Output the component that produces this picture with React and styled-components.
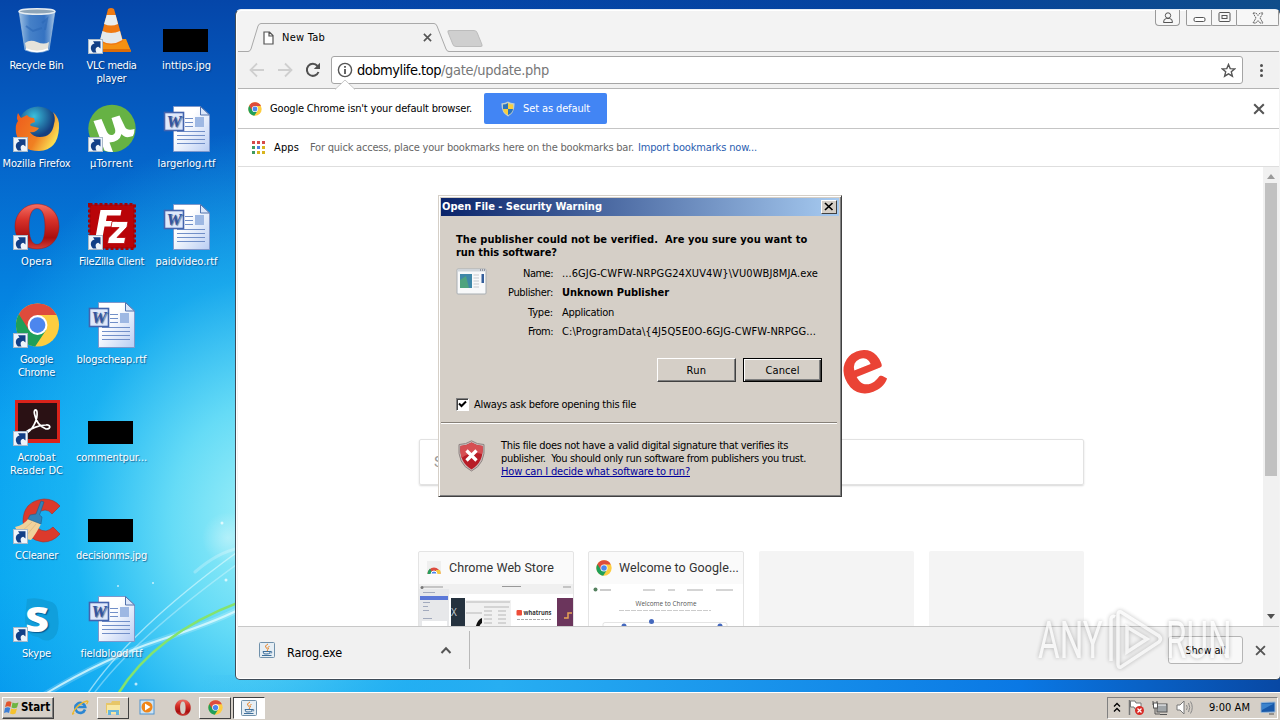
import { useLayoutEffect, useRef, useState } from "react";
import styled, { createGlobalStyle } from "styled-components";

/* Spreads the letters so that a label takes the width it has in Tahoma */
function Label({ children, w, ...props }) {
  const ref = useRef(null);
  const [spacing, setSpacing] = useState(0);

  useLayoutEffect(() => {
    const natural = ref.current.getBoundingClientRect().width;
    setSpacing((w - natural) / children.length);
  }, [children, w]);

  return (
    <LabelText ref={ref} style={{ letterSpacing: spacing }} {...props}>
      {children}
    </LabelText>
  );
}

function ShortcutArrow({ x = 0 }) {
  return (
    <g transform={`translate(${x} 33)`}>
      <rect x="0.5" y="0.5" width="14" height="14" fill="#eef4fa" stroke="#a9b9c9" />
      <path d="M5 13.500C1.500 10 2.500 5.500 6.500 4.500L5 2.200H12.500V9.500L10.300 7.800C7.500 8.500 7 10.500 8.500 13.500Z" fill="#123f86" />
    </g>
  );
}

function ChromeLogo({ size = 16 }) {
  return (
    <svg width={size} height={size} viewBox="0 0 48 48">
      <circle cx="24" cy="24" r="23" fill="#fdcd40" />
      <path d="M24 24L4.100 12.500A23 23 0 0 0 21.500 46.900L33.200 29.300Z" fill="#1f9f59" />
      <path d="M24 13.400H44.400A23 23 0 0 0 4.100 12.500L14.800 29.300Z" fill="#de4b3c" />
      <circle cx="24" cy="24" r="10.600" fill="#fff" />
      <circle cx="24" cy="24" r="8.400" fill="#4c86ee" />
    </svg>
  );
}

function RecycleBin() {
  return (
    <svg width="48" height="48">
      <defs>
        <linearGradient id="glass">
          <stop offset="0" stopColor="#b9d6ee" stopOpacity=".85" />
          <stop offset=".3" stopColor="#5c93d0" stopOpacity=".75" />
          <stop offset=".7" stopColor="#4a83c9" stopOpacity=".7" />
          <stop offset="1" stopColor="#c4dcf0" stopOpacity=".85" />
        </linearGradient>
      </defs>
      <path d="M7 5L13 44Q25 49 37 44L43 5Z" fill="url(#glass)" stroke="#9fc0df" strokeWidth=".7" />
      <path d="M13 37Q18 33 25 36T37 36L36 43Q25 48 14 43Z" fill="#e6e3da" />
      <path d="M14 43Q25 48 36 43" fill="none" stroke="#fff" strokeWidth="1.600" />
      <path d="M14 20L21 25L30 22M30 17L35 13L33 24" stroke="#2d68b7" strokeWidth="2" fill="none" opacity=".65" />
      <ellipse cx="25" cy="5.500" rx="18" ry="2.700" fill="#8ea5b8" stroke="#e6edf2" strokeWidth="1.500" />
    </svg>
  );
}

function Vlc() {
  return (
    <svg width="48" height="48">
      <path d="M13 33H39L44 45Q44 46 42 46H10Z" fill="#f59112" />
      <path d="M10 43H43L44 46H10Z" fill="#dd6d08" />
      <path d="M21 3Q24 1 27 3L36 35Q24 43 13 35Z" fill="#f07a12" />
      <path d="M19.700 9H28.700L31 18Q24 21 17 18Z" fill="#e9edef" />
      <path d="M15.400 25Q24 29 33 25L35.400 34Q24 41 13 34Z" fill="#e4e9ec" />
      <ShortcutArrow x={1} />
    </svg>
  );
}

function BlackImage() {
  return (
    <svg width="48" height="48">
      <rect x="1" y="23" width="45" height="23" fill="#000" />
    </svg>
  );
}

function Firefox() {
  return (
    <svg width="48" height="48">
      <defs>
        <linearGradient id="fox" x1="0" y1="0" x2="1" y2=".5">
          <stop offset="0" stopColor="#ee5a1d" />
          <stop offset=".65" stopColor="#f08022" />
          <stop offset="1" stopColor="#fadb52" />
        </linearGradient>
        <radialGradient id="globe" cx=".4" cy=".25">
          <stop offset="0" stopColor="#39c1dd" />
          <stop offset="1" stopColor="#153f80" />
        </radialGradient>
      </defs>
      <circle cx="26" cy="22.500" r="20" fill="url(#globe)" />
      <path d="M41 8Q44 14 42 20Q40 33 28 33Q21 33 18 28Q24 29 27 24L19 22Q16 20 23 18L22 14Q17 14 15 11L9 14L6 9Q4 14 6 17Q3 20 4 29Q8 47 27 47Q46 46 47 24Q48 14 41 8Z" fill="url(#fox)" />
      <ShortcutArrow x={1} />
    </svg>
  );
}

function UTorrent() {
  return (
    <svg width="49" height="48">
      <circle cx="25" cy="24.500" r="23.700" fill="#66b244" />
      <path d="M6.500 17L14.500 15L19.500 27Q22 32.500 26.500 30.500Q29 29 28 25L24.500 14L32.500 11.500L38 23Q40 27 47.500 25Q47.500 29 46 32Q38 35 34.500 30Q32.500 38 22.500 38.500L26 48Q21 48 17.500 46.500Z" fill="#fff" />
      <ShortcutArrow x={1} />
    </svg>
  );
}

function WordDoc() {
  return (
    <svg width="50" height="48">
      <defs>
        <linearGradient id="paper" x1="0" y1="0" x2="1" y2="1">
          <stop offset=".35" stopColor="#fff" />
          <stop offset="1" stopColor="#b9cdf3" />
        </linearGradient>
      </defs>
      <path d="M11.500 2.500H38.500L47.500 11V47.500H11.500Z" fill="url(#paper)" stroke="#7e98cb" />
      <path d="M38.500 2.500V11H47.500Z" fill="#dbe6f9" stroke="#5272ac" />
      <path d="M23 14.500H31M23 18.500H31M23 22.500H31M15 27.500H43M15 31.500H43M15 35.500H43M15 39.500H43" stroke="#718fc8" />
      <rect x="33" y="13" width="9" height="10" fill="#9eb8e3" />
      <rect x="2.500" y="8.500" width="19" height="18" fill="#dfe9fb" stroke="#4464ad" strokeWidth="1.600" />
      <text x="12" y="23" textAnchor="middle" fontFamily="Liberation Serif, serif" fontSize="17" fontWeight="700" fontStyle="italic" fill="#34559f">W</text>
    </svg>
  );
}

function OperaMark({ size = 48, shortcut }) {
  return (
    <svg width={size} height={size} viewBox="0 0 48 48">
      <defs>
        <linearGradient id="opera" x1="0" y1="0" x2="0" y2="1">
          <stop offset="0" stopColor="#f47065" />
          <stop offset=".35" stopColor="#d8322a" />
          <stop offset=".75" stopColor="#a80e0f" />
          <stop offset="1" stopColor="#d2413a" />
        </linearGradient>
      </defs>
      <path fillRule="evenodd" d="M25 2C38 2 47 11 47 24.500S38 47 25 47S3 37 3 24.500S12 2 25 2ZM25 6.500C19 6.500 17 15 17 24.500S19 42.500 25 42.500S33 34 33 24.500S31 6.500 25 6.500Z" fill="url(#opera)" stroke="#9e1715" strokeWidth=".5" />
      {shortcut && <ShortcutArrow x={1} />}
    </svg>
  );
}

function FileZilla() {
  return (
    <svg width="50" height="48">
      <rect x="2.500" y="2.500" width="45" height="44" fill="#b90408" stroke="#a30307" strokeWidth="3" strokeDasharray="3 2" />
      <path d="M13.500 8H34.500L33.500 13.500H20L19 19H30L29 24.500H17.500L15 38H8Z" fill="#fff" />
      <path d="M25 19.500H41L40 25L30 35.500H38.500L37.500 41.500H20.500L21.500 36L32 25.500H24Z" fill="#fff" stroke="#b90408" strokeWidth=".8" />
      <ShortcutArrow x={1} />
    </svg>
  );
}

function ChromeShortcut() {
  return (
    <svg width="48" height="48">
      <g transform="translate(3 2.500)">
        <ChromeLogo size={45} />
      </g>
      <ShortcutArrow x={1} />
    </svg>
  );
}

function Acrobat() {
  return (
    <svg width="49" height="48">
      <rect x="3" y="2" width="45" height="43" fill="#d9231b" />
      <rect x="6" y="5" width="39" height="36" fill="#2a1114" />
      <path d="M13 36C20 33 26 22 25 14C24.500 10 21.500 12 22.500 16C24 24 29 29 34 31C40 31 38 26 34 27C27 27 18 31 14 34C13 35 12 36 13 36Z" fill="none" stroke="#fff" strokeWidth="1.700" />
      <ShortcutArrow x={1} />
    </svg>
  );
}

function CCleaner() {
  return (
    <svg width="50" height="48">
      <path d="M48 10L40 18Q37 14 33 14Q22 15 23 26Q25 35 34 35Q38 34 41 31L48 38Q41 46 31 46Q14 44 11 26Q11 5 32 3Q42 3 48 10Z" fill="#dc3a2c" stroke="#ad2a22" strokeWidth=".6" />
      <path d="M17 22L29 28Q24 38 19 44Q9 44 3 31Q12 29 17 22Z" fill="#f0d29b" />
      <path d="M9 36L20 26M14 40L24 28" stroke="#e3bf86" />
      <path d="M29 5L32 6L27.500 19L30 21L29 28L16 23L18 19L24 18Z" fill="#3183b9" stroke="#1d608f" strokeWidth=".6" />
      <ShortcutArrow x={1} />
    </svg>
  );
}

function Skype() {
  return (
    <svg width="48" height="48">
      <path d="M15 5Q26 3 36 7Q46 8 46 21Q49 42 38 46Q32 48 26 43Q13 42 13 24Z" fill="#109fdc" />
      <text x="25" y="38" textAnchor="middle" textLength="24" lengthAdjust="spacingAndGlyphs" fontFamily="Open Sans, sans-serif" fontSize="36" fontWeight="800" fill="#fff">S</text>
      <ShortcutArrow x={1} />
    </svg>
  );
}

function JavaFile() {
  return (
    <svg width="16" height="16">
      <rect x="0.5" y="0.5" width="15" height="15" rx="1" fill="#e6eef4" stroke="#7091ab" />
      <path d="M9 2Q5 4 7.500 6T8 9M10.500 4Q8 5.500 9.500 7" stroke="#e88326" fill="none" />
      <path d="M4 9.500H11V11Q10 12 7 12T4.500 11ZM11 9.500Q14 9 12 11.500M3 13.500H12.500" stroke="#3e6f9b" fill="none" />
    </svg>
  );
}

function CloseMark({ size = 10, width = 2 }) {
  return (
    <svg width={size} height={size} viewBox="0 0 10 10">
      <path d="M1 1L9 9M9 1L1 9" stroke="#555" strokeWidth={width} />
    </svg>
  );
}

function ShieldIcon() {
  return (
    <svg width="14" height="16" viewBox="0 0 14 16">
      <path d="M7 .5Q10 2.500 13.500 2.300Q14 12 7 15.500Q0 12 .5 2.300Q4 2.500 7 .5Z" fill="#c4cfc8" />
      <path d="M7 2Q4.500 3.500 2 3.500V8H7Z" fill="#2c74ba" />
      <path d="M7 2Q9.500 3.500 12 3.500V8H7Z" fill="#f6cf40" />
      <path d="M2 8H7V14Q2.500 12 2 8Z" fill="#f6cf40" />
      <path d="M12 8H7V14Q11.500 12 12 8Z" fill="#2c74ba" />
    </svg>
  );
}

const desktopItems = [
  { icon: <RecycleBin />, lines: [["Recycle Bin", 54]] },
  { icon: <Firefox />, lines: [["Mozilla Firefox", 68]] },
  { icon: <OperaMark shortcut />, lines: [["Opera", 31]] },
  { icon: <ChromeShortcut />, lines: [["Google", 33], ["Chrome", 37]] },
  { icon: <Acrobat />, lines: [["Acrobat", 38], ["Reader DC", 53]] },
  { icon: <CCleaner />, lines: [["CCleaner", 43]] },
  { icon: <Skype />, lines: [["Skype", 29]] },
  { icon: <Vlc />, lines: [["VLC media", 50], ["player", 30]] },
  { icon: <UTorrent />, lines: [["µTorrent", 43]] },
  { icon: <FileZilla />, lines: [["FileZilla Client", 65]] },
  { icon: <WordDoc />, lines: [["blogscheap.rtf", 70]] },
  { icon: <BlackImage />, lines: [["commentpur...", 71]] },
  { icon: <BlackImage />, lines: [["decisionms.jpg", 71]] },
  { icon: <WordDoc />, lines: [["fieldblood.rtf", 62]] },
  { icon: <BlackImage />, lines: [["inttips.jpg", 49]] },
  { icon: <WordDoc />, lines: [["largerlog.rtf", 58]] },
  { icon: <WordDoc />, lines: [["paidvideo.rtf", 62]] },
];

const appColours = ["#d64a4a", "#d64a4a", "#d64a4a", "#3f9a5f", "#4a7fe0", "#d9b51e", "#3f9a5f", "#d9b51e", "#d9b51e"];

function Wallpaper() {
  return (
    <Swoops width="240" height="240" viewBox="0 460 240 240">
      <defs>
        <radialGradient id="flare">
          <stop offset="0" stopColor="#fff" stopOpacity=".35" />
          <stop offset="1" stopColor="#fff" stopOpacity="0" />
        </radialGradient>
      </defs>
      <g fill="none" strokeLinecap="round">
        <path d="M42 696Q105 658 160 640T240 609" stroke="#fff" strokeOpacity=".2" strokeWidth="6" />
        <path d="M45 694Q105 658 160 640T240 609" stroke="#dffbff" strokeOpacity=".8" strokeWidth="2" />
        <path d="M86 696Q130 630 236 553" stroke="#dffbff" strokeOpacity=".6" strokeWidth="1.500" />
        <path d="M92 696Q132 640 240 562" stroke="#dffbff" strokeOpacity=".4" strokeWidth="1.500" />
        <path d="M118 694Q155 634 240 602" stroke="#84e36d" strokeWidth="2.500" />
        <path d="M195 572Q218 552 240 548" stroke="#fff" strokeOpacity=".25" strokeWidth="3" />
      </g>
      <circle cx="228" cy="538" r="26" fill="url(#flare)" />
      <g fill="#fff" fillOpacity=".7">
        <circle cx="222" cy="523" r="1.500" />
        <circle cx="226" cy="580" r="1.500" />
        <circle cx="153" cy="583" r="1" />
        <circle cx="118" cy="586" r="1" />
        <circle cx="136" cy="684" r="1.500" />
      </g>
    </Swoops>
  );
}

function BrowserWindow() {
  return (
    <Browser>
      <TabStrip>
        <Tab>
          <TabShape width="204" height="29">
            <path d="M0 28.500H2Q4 28.500 5 26L12 3Q13 .5 15 .5H188Q190 .5 191 3L200 26Q201 28.500 203 28.500V30H0Z" fill="#f1f1f1" />
            <path d="M0 28.500H2Q4 28.500 5 26L12 3Q13 .5 15 .5H188Q190 .5 191 3L200 26Q201 28.500 203 28.500" fill="none" stroke="#a9a9a9" />
          </TabShape>
          <svg width="11" height="14">
            <path d="M1 1H6.500L10 4.500V13H1ZM6 1V5H10" fill="#fff" stroke="#555" strokeWidth="1.200" />
          </svg>
          <TabTitle>
            <Label w={43}>New Tab</Label>
          </TabTitle>
          <CloseMark size={9} width={1.800} />
        </Tab>
        <NewTabButton />
        <WindowButtons>
          <CaptionBox $w={25} $alone>
            <svg width="12" height="12">
              <circle cx="6" cy="3.500" r="2.700" fill="none" stroke="#555" />
              <path d="M1.500 10.500Q1.500 6.500 4.500 6.500H7.500Q10.500 6.500 10.500 10.500Z" fill="none" stroke="#555" />
            </svg>
          </CaptionBox>
          <CaptionBox $w={26}>
            <svg width="13" height="13">
              <rect x="1" y="6.500" width="11" height="4" rx="1.500" fill="#fff" stroke="#555" />
            </svg>
          </CaptionBox>
          <CaptionBox $w={26}>
            <svg width="13" height="13">
              <rect x="1" y="1.500" width="11" height="9" rx="1" fill="none" stroke="#555" />
              <rect x="4" y="4.500" width="5" height="3" fill="none" stroke="#555" />
            </svg>
          </CaptionBox>
          <CaptionBox $w={43}>
            <svg width="12" height="12">
              <path d="M1 1H4L6 3.500L8 1H11L8 6L11 11H8L6 8.500L4 11H1L4 6Z" fill="none" stroke="#666" strokeDasharray="2 .6" />
            </svg>
          </CaptionBox>
        </WindowButtons>
      </TabStrip>

      <Toolbar>
        <svg width="16" height="16">
          <path d="M15 8H2M8 1.500L1.500 8L8 14.500" stroke="#cfcfcf" strokeWidth="1.800" fill="none" />
        </svg>
        <svg width="16" height="16">
          <path d="M1 8H14M8 1.500L14.500 8L8 14.500" stroke="#cfcfcf" strokeWidth="1.800" fill="none" />
        </svg>
        <svg width="16" height="16">
          <path d="M13.500 10A6 6 0 1 1 12.500 4" stroke="#505050" strokeWidth="2" fill="none" />
          <path d="M15 .8V7H8.800Z" fill="#505050" />
        </svg>
        <Omnibox>
          <svg width="16" height="16">
            <circle cx="8" cy="8" r="6.600" fill="none" stroke="#555" strokeWidth="1.400" />
            <path d="M8 7V12M8 4V5.700" stroke="#555" strokeWidth="1.800" />
          </svg>
          <Url>
            <Label w={84}>dobmylife.top</Label>
            <UrlPath>
              <Label w={108}>/gate/update.php</Label>
            </UrlPath>
          </Url>
          <svg width="15" height="15" viewBox="0 0 15 15">
            <path d="M7.500 1.500L9.200 5.600L13.700 5.900L10.300 8.800L11.400 13.200L7.500 10.800L3.600 13.200L4.700 8.800L1.300 5.900L5.800 5.600Z" fill="none" stroke="#555" strokeWidth="1.400" />
          </svg>
        </Omnibox>
        <MenuDots>
          <i />
          <i />
          <i />
        </MenuDots>
      </Toolbar>

      <InfoBar>
        <Pointer width="22" height="11">
          <path d="M1 10.500L11 1L21 10.500" fill="#fff" stroke="#bbb" strokeWidth=".8" />
        </Pointer>
        <ChromeLogo size={14} />
        <InfoText>
          <Label w={202}>Google Chrome isn't your default browser.</Label>
        </InfoText>
        <DefaultButton type="button">
          <ShieldIcon />
          <Label w={67}>Set as default</Label>
        </DefaultButton>
        <CloseMark size={12} width={1.700} />
      </InfoBar>

      <BookmarkBar>
        <AppsGrid>
          {appColours.map((colour, i) => (
            <AppsDot key={i} $colour={colour} />
          ))}
        </AppsGrid>
        <AppsLabel>
          <Label w={25}>Apps</Label>
        </AppsLabel>
        <Label w={324}>For quick access, place your bookmarks here on the bookmarks bar.</Label>
        <ImportLink>
          <Label w={119}>Import bookmarks now...</Label>
        </ImportLink>
      </BookmarkBar>

      <Page>
        <NewTabPage>
          <LogoLetter>e</LogoLetter>
          <SearchBox>S</SearchBox>
          <Tiles>
            <Tile>
              <TileTitle>
                <svg width="16" height="16">
                  <path d="M1 1H15V12H1Z" fill="#efefef" />
                  <path d="M1.500 14A6.500 6.500 0 0 1 14.500 14L8 11Z" fill="#dd4b3e" />
                  <path d="M1.500 14Q2 10 4 8.500L7 14Z" fill="#279d5b" />
                  <path d="M10 10H14Q15 12 14.500 14H10Z" fill="#f5c843" />
                  <path d="M5 14A3 3 0 0 1 11 14Z" fill="#4c86ee" stroke="#fff" />
                </svg>
                <Label w={105}>Chrome Web Store</Label>
              </TileTitle>
              <StoreThumb />
            </Tile>
            <Tile>
              <TileTitle>
                <ChromeLogo size={16} />
                <Label w={120}>Welcome to Google...</Label>
              </TileTitle>
              <WelcomeThumb />
            </Tile>
            <Tile $empty />
            <Tile $empty />
          </Tiles>
        </NewTabPage>
        <Scrollbar>
          <svg width="8" height="5">
            <path d="M0 5L4 0L8 5Z" fill="#9b9b9b" />
          </svg>
          <ScrollThumb />
          <svg width="8" height="5">
            <path d="M0 0L4 5L8 0Z" fill="#505050" />
          </svg>
        </Scrollbar>
      </Page>

      <DownloadBar>
        <Download>
          <JavaFile />
          <DownloadName>
            <Label w={55}>Rarog.exe</Label>
          </DownloadName>
          <svg width="12" height="8">
            <path d="M1.500 7L6 2.200L10.500 7" stroke="#555" strokeWidth="2" fill="none" />
          </svg>
        </Download>
        <ShowAll type="button">
          <Label w={40}>Show all</Label>
        </ShowAll>
        <CloseMark size={11} width={1.700} />
      </DownloadBar>
    </Browser>
  );
}

function StoreThumb() {
  return (
    <svg width="154" height="48">
      <rect width="154" height="48" fill="#fff" />
      <rect width="154" height="10" fill="#f0f0f0" />
      <path d="M3 3H24M83 2.500H102M144 3H152" stroke="#999" />
      <circle cx="3" cy="3.500" r="1.500" fill="#777" />
      <rect y="5" width="30" height="43" fill="#e7e8ea" />
      <rect x="1" y="12" width="28" height="4" fill="#5b78d8" />
      <path d="M4 8.500H16M4 18.500H11M4 22.500H9M4 26.500H10M4 34.500H13" stroke="#9aa3b8" strokeWidth=".9" />
      <rect x="3" y="37" width="25" height="5" fill="#fff" />
      <rect x="32" y="14" width="14" height="34" fill="#25323f" />
      <text x="32" y="32" fontFamily="Open Sans, sans-serif" fontSize="10" fill="#c8d0d6">X</text>
      <rect x="46" y="16" width="46" height="32" fill="#f1f1f1" />
      <path d="M47 18H91M47 29H63M65 23H90M65 27H73M79 27H87M65 31H73M79 31H87M65 35H73M79 35H87M65 39H73M79 39H87M65 43H73M79 43H87" stroke="#aaa" strokeWidth=".8" />
      <path d="M56 48Q57 36 63 34V39Q59 42 60 48Z" fill="#111" />
      <rect x="97.500" y="26" width="5.500" height="5.500" rx="1" fill="#ee4d38" />
      <text x="104.500" y="31" textLength="28" lengthAdjust="spacingAndGlyphs" fontFamily="Open Sans, sans-serif" fontSize="7" fontWeight="700" fill="#333">whatruns</text>
      <path d="M98 35.500H132" stroke="#aaa" strokeDasharray="3 1" />
      <rect x="138" y="14" width="16" height="34" fill="#6b355c" />
      <path d="M145 34H149V29H153" stroke="#e7a353" strokeWidth="1.500" fill="none" />
    </svg>
  );
}

function WelcomeThumb() {
  return (
    <svg width="154" height="48">
      <rect width="154" height="48" fill="#fff" />
      <circle cx="6.500" cy="5.500" r="2" fill="#55815f" />
      <path d="M11 6H22" stroke="#999" />
      <path d="M54 6H66M79 6H86M98 6H114M127 6H144" stroke="#aaa" />
      <text x="46.500" y="22" textLength="61" lengthAdjust="spacingAndGlyphs" fontFamily="Open Sans, sans-serif" fontSize="7" fill="#555">Welcome to Chrome</text>
      <path d="M30 26.500H122" stroke="#ccc" strokeDasharray="5 1" />
      <rect x="14" y="38.500" width="124" height="14" rx="2" fill="#fff" stroke="#e4e4e4" />
      <circle cx="62.500" cy="37.500" r="2.500" fill="#4468bd" />
      <circle cx="35" cy="42" r="2.500" fill="#4468bd" />
      <circle cx="131" cy="42" r="2.500" fill="#4468bd" />
    </svg>
  );
}

function SecurityDialog() {
  return (
    <Dialog>
      <TitleBar>
        <Label w={160}>Open File - Security Warning</Label>
        <CloseButton type="button">
          <svg width="10" height="9">
            <path d="M1 1L8.500 8M8.500 1L1 8" stroke="#000" strokeWidth="1.700" />
          </svg>
        </CloseButton>
      </TitleBar>
      <DialogBody>
        <Question>
          <Label w={351}>The publisher could not be verified.  Are you sure you want to</Label>
          <Label w={101}>run this software?</Label>
        </Question>
        <FileInfo>
          <AppIcon width="31" height="27">
            <rect x="1" y="1" width="29" height="25" rx="1" fill="#f8f9fa" stroke="#a8aeb3" />
            <path d="M1.500 2.500H29.500" stroke="#cfd5da" strokeWidth="2" />
            <path d="M24 2H29" stroke="#556" strokeDasharray="1 1" />
            <rect x="4" y="6" width="12" height="14" fill="#3f87a8" />
            <path d="M4 20V12L10 8L13 20Z" fill="#4fa37e" />
            <path d="M17.500 7H23M17.500 10H23M17.500 13H23M17.500 16H23M17.500 19H23" stroke="#c5c9ce" />
            <rect x="25.500" y="6" width="2.500" height="9" fill="#355f9b" />
          </AppIcon>
          <Facts>
            <Label w={30}>Name:</Label>
            <Label w={256}>...6GJG-CWFW-NRPGG24XUV4W}\VU0WBJ8MJA.exe</Label>
            <Label w={45}>Publisher:</Label>
            <b>
              <Label w={107}>Unknown Publisher</Label>
            </b>
            <Label w={25}>Type:</Label>
            <Label w={52}>Application</Label>
            <Label w={25}>From:</Label>
            <Label w={254}>{"C:\\ProgramData\\{4J5Q5E0O-6GJG-CWFW-NRPGG..."}</Label>
          </Facts>
        </FileInfo>
        <Actions>
          <DialogButton type="button">
            <Label w={20}>Run</Label>
          </DialogButton>
          <DialogButton type="button" $default>
            <Label w={34}>Cancel</Label>
          </DialogButton>
        </Actions>
        <AlwaysAsk>
          <CheckBox>
            <svg width="9" height="9">
              <path d="M1 3.500L3.500 6L8 1.500" stroke="#000" strokeWidth="2" fill="none" />
            </svg>
          </CheckBox>
          <Label w={162}>Always ask before opening this file</Label>
        </AlwaysAsk>
      </DialogBody>
      <Divider />
      <DialogFooter>
        <svg width="27" height="32" viewBox="0 0 27 32">
          <path d="M13.500 .8Q19 4.500 26 4.500Q28 24 13.500 31Q-1 24 1 4.500Q8 4.500 13.500 .8Z" fill="#c9b9b8" stroke="#8e8482" />
          <path d="M13.500 2.500Q18 5.500 24.500 6Q26 22 13.500 29.500Q1 22 2.500 6Q9 5.500 13.500 2.500Z" fill="#b81d27" />
          <path d="M13.500 2.500Q18 5.500 24.500 6Q25 11 24 14Q13 11 3.500 18Q2 12 2.500 6Q9 5.500 13.500 2.500Z" fill="#d64f53" />
          <path d="M8.500 10.500L18.500 20.500M18.500 10.500L8.500 20.500" stroke="#fff" strokeWidth="3.300" />
        </svg>
        <FooterText>
          <Label w={287}>This file does not have a valid digital signature that verifies its</Label>
          <Label w={305}>publisher.  You should only run software from publishers you trust.</Label>
          <HelpLink>
            <Label w={189}>How can I decide what software to run?</Label>
          </HelpLink>
        </FooterText>
      </DialogFooter>
    </Dialog>
  );
}

function Taskbar() {
  return (
    <Bar>
      <StartButton type="button">
        <svg width="16" height="15">
          <path d="M2.500 2Q5 .5 7.500 2L6.500 7Q4 5.500 1 7Z" fill="#e2552c" />
          <path d="M8.500 2.500Q11 4 14.500 2.500L13 7.500Q10 9 7.500 7.500Z" fill="#6fb542" />
          <path d="M1 8Q4 6.500 6.200 8L5 13Q3 11.500 0 13Z" fill="#3d7fd6" />
          <path d="M7.200 8.500Q10 10 13 8.500L11.500 13.500Q9 15 6 13.500Z" fill="#f5c22d" />
        </svg>
        <Label w={29}>Start</Label>
      </StartButton>
      <TaskItem $w={32}>
        <svg width="17" height="17">
          <path d="M13 10.500A5 5 0 1 1 13.200 8H5" stroke="#2b86d2" strokeWidth="2.600" fill="none" />
          <path d="M2 14Q-1 17 2 12Q7 4 15 2Q17 2 14.500 5" stroke="#ecb82e" strokeWidth="1.400" fill="none" />
        </svg>
      </TaskItem>
      <TaskItem $w={32} $raised>
        <svg width="17" height="16">
          <path d="M1 3H6L7 1H15V13H1Z" fill="#e7c667" />
          <path d="M2 5H15V14H2Z" fill="#f8e7a3" />
          <path d="M3 15V10H14V15H11V12H6V15Z" fill="#65b5dc" />
        </svg>
      </TaskItem>
      <TaskItem $w={35}>
        <svg width="17" height="17">
          <rect x="1" y="1" width="14" height="14" fill="#cde4f5" stroke="#4e94cf" />
          <circle cx="8" cy="8" r="5.500" fill="#f08618" />
          <path d="M6 4.500L11.500 8L6 11.500Z" fill="#fff" />
        </svg>
      </TaskItem>
      <TaskItem $w={32}>
        <OperaMark size={17} />
      </TaskItem>
      <TaskItem $w={32} $raised>
        <ChromeLogo size={15} />
      </TaskItem>
      <TaskItem $w={32} $active>
        <JavaFile />
      </TaskItem>
      <Tray>
        <svg width="8" height="11">
          <path d="M1 4.500L4 1.500L7 4.500M1 9.500L4 6.500L7 9.500" stroke="#000" strokeWidth="1.300" fill="none" />
        </svg>
        <svg width="17" height="17">
          <path d="M1.500 1V16" stroke="#777" strokeWidth="1.500" />
          <path d="M2.500 2H7L8 4H13V10H7L6 8H2.500Z" fill="#fff" stroke="#777" />
          <circle cx="11.500" cy="11.500" r="4.500" fill="#d82b25" />
          <path d="M9.500 9.500L13.500 13.500M13.500 9.500L9.500 13.500" stroke="#fff" strokeWidth="1.300" />
        </svg>
        <svg width="17" height="16">
          <rect x="5" y="4" width="10" height="8" fill="#a0a5a8" stroke="#555" />
          <path d="M6 5H14" stroke="#fff" />
          <path d="M8 14.500H15M3 8V14H8M1 1V5H5V1" stroke="#555" fill="none" />
          <rect x="1.500" y="3" width="4" height="5" fill="#fff" stroke="#555" />
        </svg>
        <svg width="17" height="15">
          <path d="M1 5H4L8 1V14L4 10H1Z" fill="#fff" stroke="#777" />
          <path d="M10.500 5Q12 7.500 10.500 10M12.500 3Q15 7.500 12.500 12M14.500 1.500Q18 7.500 14.500 13.500" stroke="#888" fill="none" />
        </svg>
        <Clock>
          <Label w={41}>9:00 AM</Label>
        </Clock>
        <svg width="16" height="14">
          <path d="M1 1.500L15 1V11L1 11.500Z" fill="#1758a9" stroke="#9bb9d7" />
          <path d="M2 2.500H14L2 9Z" fill="#3b83cd" />
          <path d="M9 13H14" stroke="#555" />
        </svg>
      </Tray>
    </Bar>
  );
}

export default function App() {
  return (
    <>
      <GlobalStyle />
      <Desktop>
        <Wallpaper />
        <IconGrid>
          {desktopItems.map((item) => (
            <DesktopIcon key={item.lines[0][0]}>
              <IconSlot>{item.icon}</IconSlot>
              {item.lines.map(([text, width]) => (
                <Label key={text} w={width}>
                  {text}
                </Label>
              ))}
            </DesktopIcon>
          ))}
        </IconGrid>
        <BrowserWindow />
        <SecurityDialog />
        <Taskbar />
        <Watermark>
          <WatermarkText $w={68}>ANY</WatermarkText>
          <svg width="60" height="66" viewBox="0 0 60 66">
            <path d="M5 53V11Q6 7 9 9M15 4L53 28Q56 31 53 34L15 59Q12 60 12 56V7Q12 3 15 4ZM21 19V44L41 31Z" fill="none" stroke="#fff" strokeWidth="3.500" strokeOpacity=".85" />
          </svg>
          <WatermarkText $w={66}>RUN</WatermarkText>
        </Watermark>
      </Desktop>
    </>
  );
}

const GlobalStyle = createGlobalStyle`
  * {
    box-sizing: border-box;
  }

  body {
    margin: 0;
    overflow: hidden;
    font-family: "DejaVu Sans Condensed", "DejaVu Sans", sans-serif;
    font-stretch: condensed;
    font-size: 11px;
    line-height: 13px;
    color: #000;
  }

  button {
    font: inherit;
    font-stretch: condensed;
    color: inherit;
    padding: 0;
  }

  svg {
    display: block;
    flex: none;
    font-stretch: normal;
  }
`;

const LabelText = styled.span`
  display: inline-block;
  white-space: pre;
`;

const Desktop = styled.main`
  position: relative;
  width: 1280px;
  height: 720px;
  overflow: hidden;
  background:
    linear-gradient(90deg, transparent 200px, #27aef2 500px, #0a78e4 1020px, #0848a4 1280px) 0 100% / 100% 45px no-repeat,
    linear-gradient(90deg, transparent 300px, #04439f 900px, #0f4d8a 1280px) 0 0 / 100% 20px no-repeat,
    radial-gradient(ellipse 310px 390px at 265px 520px, #a2f1f8 0%, rgba(112, 226, 247, 0.9) 30%, rgba(40, 194, 245, 0.6) 62%, transparent 100%),
    linear-gradient(#0546a9 0, #0561c7 140px, #0482e0 290px, #069df0 430px, #04a3f0 580px, #0598ee 700px);
`;

const Swoops = styled.svg`
  position: absolute;
  left: 0;
  top: 460px;
`;

const IconGrid = styled.div`
  position: relative;
  display: grid;
  grid-auto-flow: column;
  grid-template-rows: repeat(7, 98px);
  grid-auto-columns: 75px;
  width: 225px;
  margin-left: -1px;
`;

const DesktopIcon = styled.div`
  display: flex;
  flex-direction: column;
  align-items: center;
  padding-top: 6px;
  color: #fff;
  text-shadow: 1px 1px 1px rgba(0, 40, 90, 0.6);
`;

const IconSlot = styled.div`
  width: 49px;
  height: 48px;
  margin-bottom: 5px;
`;

const Browser = styled.section`
  position: absolute;
  left: 235px;
  top: 9px;
  width: 1046px;
  height: 671px;
  display: flex;
  flex-direction: column;
  background: #f3f3f3;
  border: 1px solid #3f4c58;
  border-top-color: #e7eef5;
  border-radius: 6px 6px 5px 5px;
  box-shadow: inset 1px 1px 0 #fff, inset 0 -1px 0 #fff;
  padding: 0 1px 2px 2px;
`;

const TabStrip = styled.div`
  display: flex;
  align-items: flex-end;
  height: 42px;
  border-bottom: 1px solid #a9a9a9;
  flex: none;
`;

const Tab = styled.div`
  position: relative;
  display: flex;
  align-items: center;
  width: 204px;
  height: 29px;
  margin: 0 0 -1px 8px;
  padding: 0 18px 0 17px;

  > * {
    position: relative;
  }
`;

const TabShape = styled.svg`
  && {
    position: absolute;
    left: 0;
    top: 0;
  }
`;

const TabTitle = styled.div`
  flex: 1;
  padding-left: 8px;
`;

const NewTabButton = styled.div`
  width: 30px;
  height: 17px;
  margin: 0 0 4px 0;
  background: #cfcfcf;
  border: 1px solid #bcbcbc;
  border-radius: 3px;
  transform: skewX(22deg);
`;

const WindowButtons = styled.div`
  align-self: flex-start;
  display: flex;
  margin-left: auto;
`;

const CaptionBox = styled.div`
  display: flex;
  align-items: center;
  justify-content: center;
  width: ${({ $w }) => $w}px;
  height: 16px;
  margin-right: ${({ $alone }) => ($alone ? "6px" : "-1px")};
  border: 1px solid #999;
  border-top: none;
  border-radius: ${({ $alone }) => ($alone ? "0 0 4px 4px" : "0 0 2px 2px")};
  background: #f7f7f7;

  &:last-child {
    margin-right: 0;
  }
`;

const Toolbar = styled.div`
  display: flex;
  align-items: center;
  gap: 12px;
  height: 37px;
  padding: 0 12px 0 11px;
  background: #f1f1f1;
  border-bottom: 1px solid #b4b4b4;
  flex: none;
`;

const Omnibox = styled.div`
  flex: 1;
  display: flex;
  align-items: center;
  height: 28px;
  margin: 0 1px 0 -2px;
  padding: 0 6px 0 5px;
  background: #fff;
  border: 1px solid #a5a5a5;
  border-radius: 3px;
`;

const Url = styled.div`
  flex: 1;
  display: flex;
  padding-left: 4px;
  font-size: 14.5px;
  line-height: 18px;
`;

const UrlPath = styled.span`
  color: #777;
`;

const MenuDots = styled.div`
  display: flex;
  flex-direction: column;
  align-items: center;
  gap: 2px;
  width: 11px;

  i {
    width: 3px;
    height: 3px;
    border-radius: 50%;
    background: #505050;
  }
`;

const InfoBar = styled.div`
  position: relative;
  display: flex;
  align-items: center;
  height: 40px;
  padding: 0 14px 0 10px;
  background: #fff;
  border-bottom: 1px solid #c5c5c5;
  flex: none;
`;

const Pointer = styled.svg`
  position: absolute;
  left: 96px;
  top: -10px;
`;

const InfoText = styled.div`
  margin: 0 12px 0 8px;
`;

const DefaultButton = styled.button`
  display: flex;
  align-items: center;
  gap: 8px;
  width: 123px;
  height: 31px;
  margin-right: auto;
  padding-left: 17px;
  border: none;
  border-radius: 2px;
  background: #4285f4;
  color: #fff;
`;

const BookmarkBar = styled.div`
  display: flex;
  align-items: center;
  height: 38px;
  padding-left: 14px;
  background: #fff;
  border-bottom: 1px solid #dedede;
  color: #666;
  flex: none;
`;

const AppsGrid = styled.div`
  display: grid;
  grid-template-columns: repeat(3, 3px);
  grid-auto-rows: 3px;
  gap: 2px;
`;

const AppsDot = styled.i`
  background: ${({ $colour }) => $colour};
`;

const AppsLabel = styled.span`
  margin: 0 11px 0 9px;
  color: #000;
`;

const ImportLink = styled.a`
  margin-left: 4px;
  color: #2a5db0;
`;

const Page = styled.div`
  display: flex;
  flex: 1;
  min-height: 0;
  background: #fff;
`;

const NewTabPage = styled.div`
  flex: 1;
  overflow: hidden;
  padding: 160px 0 0 180px;
`;

const LogoLetter = styled.div`
  width: 50px;
  height: 66px;
  margin: 0 0 46px 419px;
  color: #ea4335;
  font: 900 82px/68px Lato, sans-serif;
  transform: rotate(-22deg);
`;

const SearchBox = styled.div`
  width: 665px;
  height: 46px;
  margin-left: 1px;
  padding-left: 14px;
  border: 1px solid #e2e2e2;
  border-radius: 2px;
  box-shadow: 0 1px 2px rgba(0, 0, 0, 0.16);
  font: 15px/44px Roboto, sans-serif;
  color: #999;
`;

const Tiles = styled.div`
  display: flex;
  gap: 14.5px;
  margin-top: 66px;
`;

const Tile = styled.div`
  width: ${({ $empty }) => ($empty ? 155 : 156)}px;
  height: 130px;
  flex: none;
  background: ${({ $empty }) => ($empty ? "#f4f4f4" : "#fafafa")};
  border: ${({ $empty }) => ($empty ? "none" : "1px solid #e4e4e4")};
  border-radius: 2px;

  & + & {
    margin-left: -0.5px;
  }

  &:nth-child(n + 3) {
    margin-left: 0.5px;
  }
`;

const TileTitle = styled.div`
  display: flex;
  align-items: center;
  gap: 7px;
  height: 32px;
  padding: 0 0 1px 7px;
  font-family: Roboto, sans-serif;
  font-stretch: normal;
  font-size: 12.5px;
  color: #333;
`;

const Scrollbar = styled.div`
  display: flex;
  flex-direction: column;
  align-items: center;
  width: 16px;
  padding: 7px 0 7px;
  background: #f1f1f1;
`;

const ScrollThumb = styled.div`
  width: 12px;
  height: 293px;
  margin: 4px 0 auto;
  background: #c1c1c1;
`;

const DownloadBar = styled.div`
  display: flex;
  align-items: center;
  height: 51px;
  padding: 0 13px 4px 0;
  background: #f1f1f1;
  border-top: 1px solid #c8c8c8;
  flex: none;
`;

const Download = styled.div`
  display: flex;
  align-items: center;
  width: 232px;
  height: 38px;
  padding: 0 17px 0 21px;
  border-right: 1px solid #b9b9b9;
`;

const DownloadName = styled.div`
  flex: 1;
  padding: 4px 0 0 12px;
  font-size: 12.5px;
`;

const ShowAll = styled.button`
  width: 75px;
  height: 28px;
  margin: 0 12px 0 auto;
  border: 1px solid #b5b5b5;
  border-radius: 3px;
  background: #f8f8f8;
`;

const Dialog = styled.section`
  position: absolute;
  left: 438px;
  top: 195px;
  width: 404px;
  height: 302px;
  padding: 2px;
  background: #d5cfc7;
  border: 1px solid;
  border-color: #d5cfc7 #404040 #404040 #d5cfc7;
  box-shadow: inset 1px 1px 0 #fff, inset -1px -1px 0 #808080;
`;

const TitleBar = styled.header`
  display: flex;
  align-items: center;
  justify-content: space-between;
  height: 18px;
  padding: 0 2px 1px 1px;
  background: linear-gradient(90deg, #0a246a, #a6caf0);
  color: #fff;
  font-weight: 700;
`;

const CloseButton = styled.button`
  display: flex;
  align-items: center;
  justify-content: center;
  width: 16px;
  height: 14px;
  background: #d5cfc7;
  border: 1px solid;
  border-color: #fff #404040 #404040 #fff;
`;

const DialogBody = styled.div`
  height: 206px;
  padding: 17px 17px 0 15px;
`;

const Divider = styled.div`
  height: 2px;
  margin-right: 2px;
  border-top: 1px solid #868078;
  border-bottom: 1px solid #fff;
`;

const Question = styled.div`
  display: flex;
  flex-direction: column;
  align-items: flex-start;
  font-weight: 700;
`;

const FileInfo = styled.div`
  display: flex;
  margin-top: 4px;
`;

const AppIcon = styled.svg`
  margin-top: 5px;
`;

const Facts = styled.div`
  display: grid;
  grid-template-columns: 66px auto;
  grid-auto-rows: 19.5px;
  column-gap: 9px;
  align-items: center;
  justify-items: start;
  padding-top: 0.5px;

  > :nth-child(odd) {
    justify-self: end;
  }
`;

const Actions = styled.div`
  display: flex;
  justify-content: flex-end;
  gap: 7px;
  margin-top: 16.5px;
`;

const DialogButton = styled.button`
  width: 79px;
  height: 24px;
  background: #d5cfc7;
  border: 1px solid;
  border-color: ${({ $default }) => ($default ? "#000" : "#fff #404040 #404040 #fff")};
  box-shadow: ${({ $default }) =>
    $default
      ? "inset 1px 1px 0 #fff, inset -1px -1px 0 #404040, inset -2px -2px 0 #808080"
      : "inset -1px -1px 0 #808080"};
`;

const AlwaysAsk = styled.div`
  display: flex;
  align-items: center;
  gap: 5px;
  margin-top: 16px;
`;

const CheckBox = styled.span`
  width: 13px;
  height: 13px;
  padding: 1px;
  background: #fff;
  border: 1px solid;
  border-color: #808080 #fff #fff #808080;
  box-shadow: inset 1px 1px 0 #404040;
`;

const DialogFooter = styled.footer`
  display: flex;
  gap: 16px;
  padding: 15px 17px;

  > svg {
    margin-top: 1px;
  }
`;

const FooterText = styled.div`
  display: flex;
  flex-direction: column;
  align-items: flex-start;
`;

const HelpLink = styled.a`
  color: #00009c;

  ${LabelText} {
    text-decoration: underline;
  }
`;

const Bar = styled.footer`
  position: absolute;
  left: 0;
  bottom: 0;
  display: flex;
  align-items: center;
  width: 100%;
  height: 28px;
  padding: 2px 2px 0;
  background: #d5cfc7;
  border-top: 1px solid #fff;
`;

const StartButton = styled.button`
  display: flex;
  align-items: center;
  gap: 1px;
  width: 52px;
  height: 22px;
  margin-right: 10px;
  padding-left: 1px;
  background: #d5cfc7;
  border: 1px solid;
  border-color: #fff #404040 #404040 #fff;
  box-shadow: inset -1px -1px 0 #808080;
  font-size: 11.5px;
  font-weight: 700;
`;

const TaskItem = styled.div`
  display: flex;
  align-items: center;
  justify-content: center;
  width: ${({ $w }) => $w}px;
  height: 22px;
  margin-right: 1px;
  border: 1px solid;
  border-color: ${({ $raised, $active }) =>
    $raised ? "#fff #404040 #404040 #fff" : $active ? "#404040 #fff #fff #404040" : "transparent"};
  background: ${({ $active }) => ($active ? "#fff" : "transparent")};

  &:nth-child(n + 6) {
    margin-right: 2px;
  }
`;

const Tray = styled.div`
  display: flex;
  align-items: center;
  gap: 7px;
  height: 22px;
  margin-left: auto;
  padding: 0 1px 0 5px;
  border: 1px solid;
  border-color: #808080 #fff #fff #808080;
`;

const Clock = styled.div`
  margin: 0 3px 0 9px;
`;

const Watermark = styled.div`
  position: absolute;
  left: 1038px;
  top: 608px;
  display: flex;
  align-items: center;
  opacity: 0.75;
  filter: drop-shadow(0 0 2px rgba(0, 0, 0, 0.4));
  pointer-events: none;
`;

const WatermarkText = styled.div`
  width: ${({ $w }) => $w}px;
  font: 400 51px/66px Roboto, sans-serif;
  color: rgba(255, 255, 255, 0.9);
  transform: scaleX(0.65);
  transform-origin: 0 50%;
`;
